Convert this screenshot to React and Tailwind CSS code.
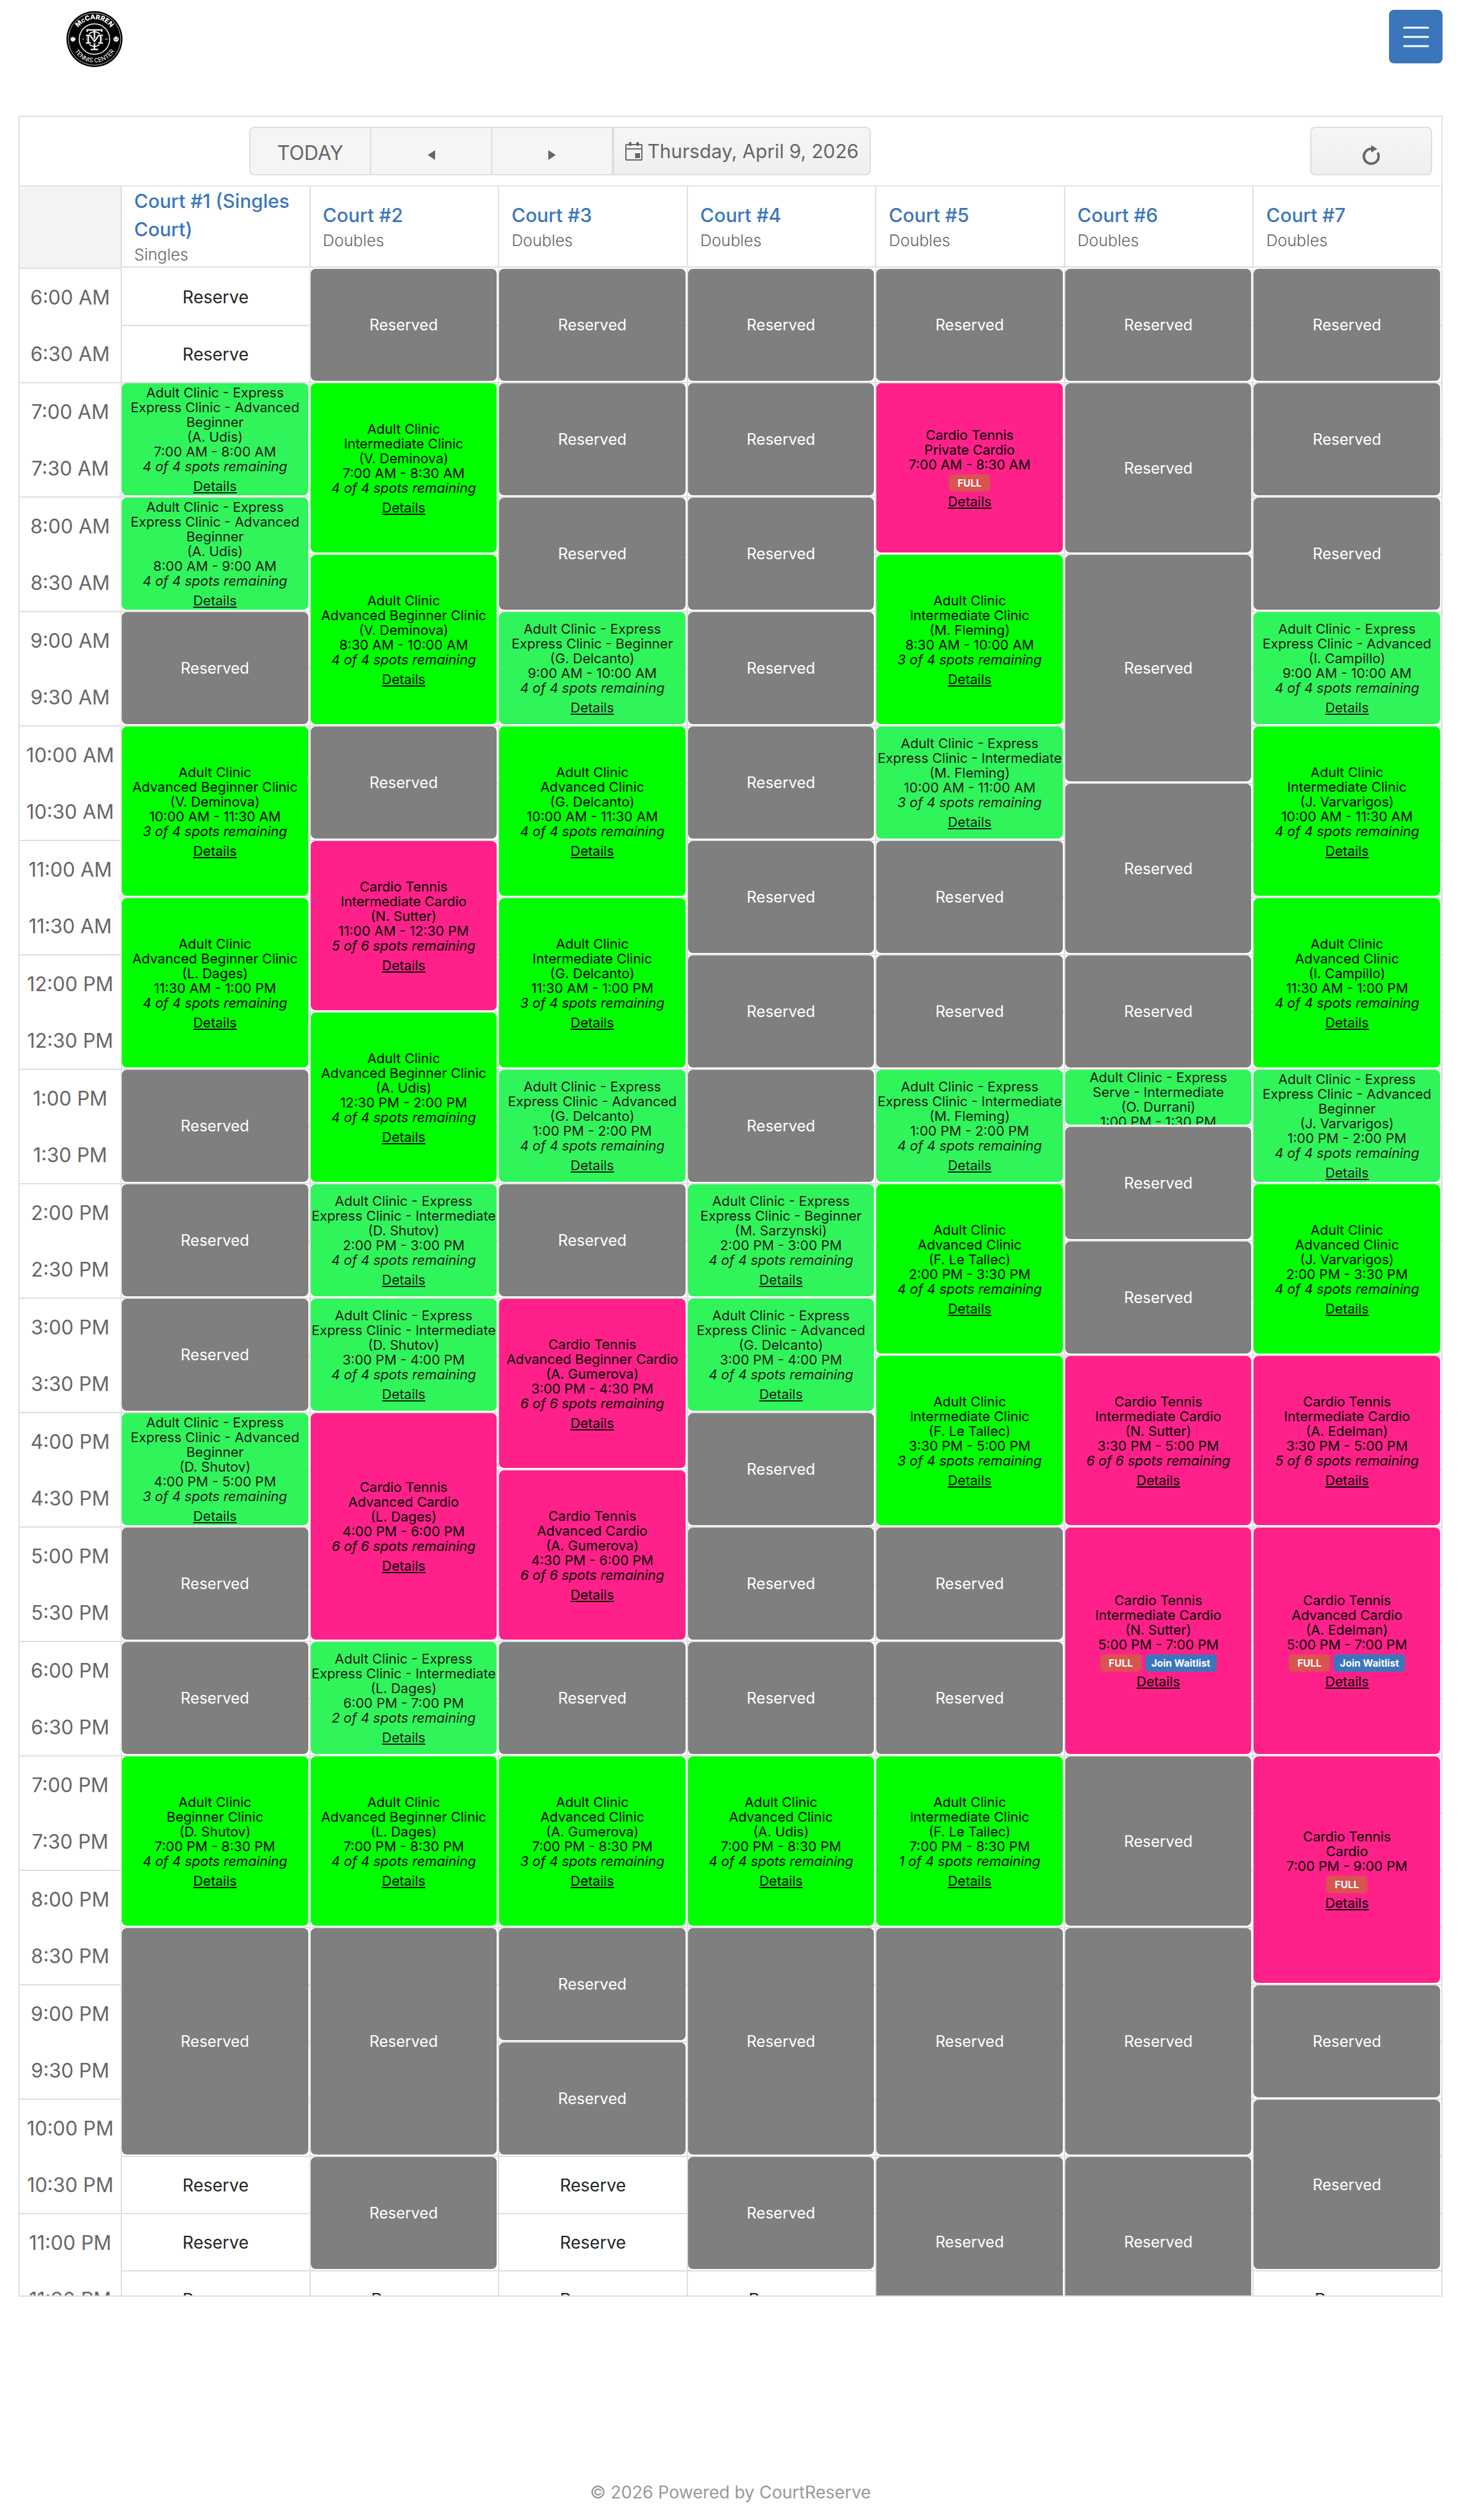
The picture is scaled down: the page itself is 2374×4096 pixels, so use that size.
import React, { useState } from 'react';

const SLOT_LABELS = [
  '6:00 AM', '6:30 AM', '7:00 AM', '7:30 AM', '8:00 AM', '8:30 AM',
  '9:00 AM', '9:30 AM', '10:00 AM', '10:30 AM', '11:00 AM', '11:30 AM',
  '12:00 PM', '12:30 PM', '1:00 PM', '1:30 PM', '2:00 PM', '2:30 PM',
  '3:00 PM', '3:30 PM', '4:00 PM', '4:30 PM', '5:00 PM', '5:30 PM',
  '6:00 PM', '6:30 PM', '7:00 PM', '7:30 PM', '8:00 PM', '8:30 PM',
  '9:00 PM', '9:30 PM', '10:00 PM', '10:30 PM', '11:00 PM', '11:30 PM',
];

const TYPES = {
  clinic: { title: 'Adult Clinic', color: 'bg-[#00ff00] text-black' },
  express: { title: 'Adult Clinic - Express', color: 'bg-[#2ff55b] text-[#1a1a1a]' },
  cardio: { title: 'Cardio Tennis', color: 'bg-[#ff2189] text-black' },
};

// start and end are slot numbers, half an hour each, counted from 6:00 AM
const reserved = (start, end) => ({ start, end, type: 'reserved' });
const event = (type, start, end, name, coach, spots, flags = {}) => ({ type, start, end, name, coach, spots, ...flags });

const COURTS = [
  {
    name: 'Court #1 (Singles Court)',
    kind: 'Singles',
    items: [
      event('express', 2, 4, 'Express Clinic - Advanced Beginner', 'A. Udis', '4 of 4'),
      event('express', 4, 6, 'Express Clinic - Advanced Beginner', 'A. Udis', '4 of 4'),
      reserved(6, 8),
      event('clinic', 8, 11, 'Advanced Beginner Clinic', 'V. Deminova', '3 of 4'),
      event('clinic', 11, 14, 'Advanced Beginner Clinic', 'L. Dages', '4 of 4'),
      reserved(14, 16),
      reserved(16, 18),
      reserved(18, 20),
      event('express', 20, 22, 'Express Clinic - Advanced Beginner', 'D. Shutov', '3 of 4'),
      reserved(22, 24),
      reserved(24, 26),
      event('clinic', 26, 29, 'Beginner Clinic', 'D. Shutov', '4 of 4'),
      reserved(29, 33),
    ],
  },
  {
    name: 'Court #2',
    kind: 'Doubles',
    items: [
      reserved(0, 2),
      event('clinic', 2, 5, 'Intermediate Clinic', 'V. Deminova', '4 of 4'),
      event('clinic', 5, 8, 'Advanced Beginner Clinic', 'V. Deminova', '4 of 4'),
      reserved(8, 10),
      event('cardio', 10, 13, 'Intermediate Cardio', 'N. Sutter', '5 of 6'),
      event('clinic', 13, 16, 'Advanced Beginner Clinic', 'A. Udis', '4 of 4'),
      event('express', 16, 18, 'Express Clinic - Intermediate', 'D. Shutov', '4 of 4'),
      event('express', 18, 20, 'Express Clinic - Intermediate', 'D. Shutov', '4 of 4'),
      event('cardio', 20, 24, 'Advanced Cardio', 'L. Dages', '6 of 6'),
      event('express', 24, 26, 'Express Clinic - Intermediate', 'L. Dages', '2 of 4'),
      event('clinic', 26, 29, 'Advanced Beginner Clinic', 'L. Dages', '4 of 4'),
      reserved(29, 33),
      reserved(33, 35),
    ],
  },
  {
    name: 'Court #3',
    kind: 'Doubles',
    items: [
      reserved(0, 2),
      reserved(2, 4),
      reserved(4, 6),
      event('express', 6, 8, 'Express Clinic - Beginner', 'G. Delcanto', '4 of 4'),
      event('clinic', 8, 11, 'Advanced Clinic', 'G. Delcanto', '4 of 4'),
      event('clinic', 11, 14, 'Intermediate Clinic', 'G. Delcanto', '3 of 4'),
      event('express', 14, 16, 'Express Clinic - Advanced', 'G. Delcanto', '4 of 4'),
      reserved(16, 18),
      event('cardio', 18, 21, 'Advanced Beginner Cardio', 'A. Gumerova', '6 of 6'),
      event('cardio', 21, 24, 'Advanced Cardio', 'A. Gumerova', '6 of 6'),
      reserved(24, 26),
      event('clinic', 26, 29, 'Advanced Clinic', 'A. Gumerova', '3 of 4'),
      reserved(29, 31),
      reserved(31, 33),
    ],
  },
  {
    name: 'Court #4',
    kind: 'Doubles',
    items: [
      reserved(0, 2),
      reserved(2, 4),
      reserved(4, 6),
      reserved(6, 8),
      reserved(8, 10),
      reserved(10, 12),
      reserved(12, 14),
      reserved(14, 16),
      event('express', 16, 18, 'Express Clinic - Beginner', 'M. Sarzynski', '4 of 4'),
      event('express', 18, 20, 'Express Clinic - Advanced', 'G. Delcanto', '4 of 4'),
      reserved(20, 22),
      reserved(22, 24),
      reserved(24, 26),
      event('clinic', 26, 29, 'Advanced Clinic', 'A. Udis', '4 of 4'),
      reserved(29, 33),
      reserved(33, 35),
    ],
  },
  {
    name: 'Court #5',
    kind: 'Doubles',
    items: [
      reserved(0, 2),
      event('cardio', 2, 5, 'Private Cardio', null, null, { full: true }),
      event('clinic', 5, 8, 'Intermediate Clinic', 'M. Fleming', '3 of 4'),
      event('express', 8, 10, 'Express Clinic - Intermediate', 'M. Fleming', '3 of 4'),
      reserved(10, 12),
      reserved(12, 14),
      event('express', 14, 16, 'Express Clinic - Intermediate', 'M. Fleming', '4 of 4'),
      event('clinic', 16, 19, 'Advanced Clinic', 'F. Le Tallec', '4 of 4'),
      event('clinic', 19, 22, 'Intermediate Clinic', 'F. Le Tallec', '3 of 4'),
      reserved(22, 24),
      reserved(24, 26),
      event('clinic', 26, 29, 'Intermediate Clinic', 'F. Le Tallec', '1 of 4'),
      reserved(29, 33),
      reserved(33, 36),
    ],
  },
  {
    name: 'Court #6',
    kind: 'Doubles',
    items: [
      reserved(0, 2),
      reserved(2, 5),
      reserved(5, 9),
      reserved(9, 12),
      reserved(12, 14),
      event('express', 14, 15, 'Serve - Intermediate', 'O. Durrani', '4 of 4'),
      reserved(15, 17),
      reserved(17, 19),
      event('cardio', 19, 22, 'Intermediate Cardio', 'N. Sutter', '6 of 6'),
      event('cardio', 22, 26, 'Intermediate Cardio', 'N. Sutter', null, { full: true, waitlist: true }),
      reserved(26, 29),
      reserved(29, 33),
      reserved(33, 36),
    ],
  },
  {
    name: 'Court #7',
    kind: 'Doubles',
    items: [
      reserved(0, 2),
      reserved(2, 4),
      reserved(4, 6),
      event('express', 6, 8, 'Express Clinic - Advanced', 'I. Campillo', '4 of 4'),
      event('clinic', 8, 11, 'Intermediate Clinic', 'J. Varvarigos', '4 of 4'),
      event('clinic', 11, 14, 'Advanced Clinic', 'I. Campillo', '4 of 4'),
      event('express', 14, 16, 'Express Clinic - Advanced Beginner', 'J. Varvarigos', '4 of 4'),
      event('clinic', 16, 19, 'Advanced Clinic', 'J. Varvarigos', '4 of 4'),
      event('cardio', 19, 22, 'Intermediate Cardio', 'A. Edelman', '5 of 6'),
      event('cardio', 22, 26, 'Advanced Cardio', 'A. Edelman', null, { full: true, waitlist: true }),
      event('cardio', 26, 30, 'Cardio', null, null, { full: true }),
      reserved(30, 32),
      reserved(32, 35),
    ],
  },
];

const Logo = () => (
  <svg viewBox="0 0 92 92" className="size-[91px]" role="img" aria-label="McCarren Tennis Center">
    <defs>
      <path id="logo-top" d="M13.500 46a32.500 32.500 0 0 1 65 0" />
      <path id="logo-bottom" d="M7.500 46a38.500 38.500 0 0 0 77 0" />
    </defs>
    <circle cx="46" cy="46" r="46" fill="#000" />
    <circle cx="46" cy="46" r="43" fill="none" stroke="#fff" strokeWidth="0.8" />
    <circle cx="46" cy="46" r="25" fill="none" stroke="#fff" strokeWidth="1.6" />
    <text fill="#fff" fontFamily="Inter, sans-serif" fontWeight="800" fontSize="11">
      <textPath href="#logo-top" startOffset="50%" textAnchor="middle">M<tspan fontSize="8">C</tspan>CARREN</textPath>
    </text>
    <text fill="#fff" fontFamily="Inter, sans-serif" fontSize="10">
      <textPath href="#logo-bottom" startOffset="50%" textAnchor="middle">TENNIS CENTER</textPath>
    </text>
    <circle cx="46" cy="46" r="12" fill="none" stroke="#fff" strokeWidth="1.8" />
    <path d="M34 34v-3h24v3M46 31v31M40 63h12" fill="none" stroke="#fff" strokeWidth="2.4" />
    <path d="M32 40h7l7 10 7-10h7M36 40v12M56 40v12M32 52.500h8M52 52.500h8" fill="none" stroke="#000" strokeWidth="4" />
    <path d="M32 40h7l7 10 7-10h7M36 40v12M56 40v12M32 52.500h8M52 52.500h8" fill="none" stroke="#fff" strokeWidth="2.200" />
    <path d="M26 46h3M63 46h5" stroke="#aaa" strokeWidth="1.500" />
    <path d="M10.500 41l1.500 3 3-1-1 3 1.500 1-3.500 2.500h-1v1.500h-1v-1.500h-1L6 47l1.500-1-1-3 3 1z" fill="#fff" />
    <circle cx="81.500" cy="46" r="4.300" fill="#fff" />
    <path d="M79.500 42.500v3a2 2 0 0 0 4 0v-3" fill="none" stroke="#000" strokeWidth="0.700" />
  </svg>
);

const Badge = ({ className, children }) => (
  <span className={`h-7 flex items-center rounded-md text-[16px] leading-6 font-bold text-white ${className}`}>{children}</span>
);

const ReservedBlock = ({ item }) => (
  <div
    className="col-start-1 mr-0.5 mb-1 rounded-lg bg-[#7f7f7f] text-white text-[25px] leading-8 flex items-center justify-center"
    style={{ gridRow: `${item.start + 1} / ${item.end + 1}` }}
  >
    Reserved
  </div>
);

const EventBlock = ({ item }) => {
  const type = TYPES[item.type];
  return (
    <div
      className={`col-start-1 min-h-0 mr-0.5 mb-1 rounded-lg overflow-hidden flex flex-col text-center text-[22px] leading-6 ${type.color}`}
      style={{ gridRow: `${item.start + 1} / ${item.end + 1}` }}
    >
      <div className="my-auto">
        <div>{type.title}</div>
        <div>{item.name}</div>
        {item.coach && <div>({item.coach})</div>}
        <div>{SLOT_LABELS[item.start]} - {SLOT_LABELS[item.end]}</div>
        {item.spots && <div className="italic pb-1">{item.spots} spots remaining</div>}
        {item.full && (
          <div className="flex justify-center gap-1.5 mt-1">
            <Badge className="px-3.5 bg-[#d9534f]">FULL</Badge>
            {item.waitlist && (
              <button><Badge className="px-2.5 bg-[#3b76bc]">Join Waitlist</Badge></button>
            )}
          </div>
        )}
        <a href="#" className="block mt-1 underline underline-offset-2">Details</a>
      </div>
    </div>
  );
};

const CourtColumn = ({ court }) => {
  const isTaken = (slot) => court.items.some((item) => slot >= item.start && slot < item.end);

  return (
    <div className="grid grid-cols-1 auto-rows-[93px] border-r-2 border-[#dedede]">
      {SLOT_LABELS.map((label, slot) => (
        <div
          key={label}
          className="col-start-1 border-b-2 border-[#dedede] flex"
          style={{ gridRow: slot + 1 }}
        >
          {!isTaken(slot) && (
            <button className="flex-1 text-[28px] leading-8 text-[#212529]">Reserve</button>
          )}
        </div>
      ))}
      {court.items.map((item) =>
        item.type === 'reserved'
          ? <ReservedBlock key={item.start} item={item} />
          : <EventBlock key={item.start} item={item} />
      )}
    </div>
  );
};

const Toolbar = ({ onShift, onToday, dateLabel }) => (
  <div className="flex justify-between py-4 pl-[373px] pr-[15px] border-b-2 border-r-2 border-[#e6e6e6] text-[32px] leading-10 text-[#666]">
    <div className="flex h-[79px]">
      <button onClick={onToday} className="w-[196px] pt-1.5 border-2 border-r-0 border-[#dedede] rounded-l-lg bg-[#f5f5f5]">TODAY</button>
      <button onClick={() => onShift(-1)} aria-label="Previous" className="w-[197px] pt-3 flex items-center justify-center border-y-2 border-l-2 border-[#dedede] bg-[#f5f5f5]">
        <svg viewBox="0 0 12 16" className="w-3 h-4"><path d="M12 0v16L0 8z" fill="#666" /></svg>
      </button>
      <button onClick={() => onShift(1)} aria-label="Next" className="w-[196px] pt-3 flex items-center justify-center border-y-2 border-l-2 border-[#dedede] bg-[#f5f5f5]">
        <svg viewBox="0 0 12 16" className="w-3 h-4"><path d="M0 0v16l12-8z" fill="#666" /></svg>
      </button>
      <button className="px-[18px] flex items-center gap-2 text-[31px] border-2 border-l-4 border-[#dedede] rounded-r-lg bg-linear-to-b from-[#f6f6f6] to-[#efefef]">
        <svg viewBox="0 0 28 30" className="w-7 h-[30px]">
          <path d="M2 4h24a1 1 0 0 1 1 1v23a1 1 0 0 1-1 1H2a1 1 0 0 1-1-1V5a1 1 0 0 1 1-1zM1 11h26" fill="none" stroke="#666" strokeWidth="2" />
          <path d="M6 0h4v6H6zM18 0h4v6h-4zM16 18h8v8h-8z" fill="#666" />
        </svg>
        {dateLabel}
      </button>
    </div>
    <button aria-label="Refresh" className="w-[198px] pt-3 flex items-center justify-center border-2 border-[#dedede] rounded-lg bg-linear-to-b from-[#f6f6f6] to-[#efefef]">
      <svg viewBox="0 0 28 32" className="w-7 h-8">
        <path d="M15 6.100A12 12 0 1 0 24.500 12" fill="none" stroke="#666" strokeWidth="4" />
        <path d="M14 0v12l10-6z" fill="#666" />
      </svg>
    </button>
  </div>
);

export default function App() {
  const [date, setDate] = useState(new Date(2026, 3, 9));

  const shiftDate = (days) => {
    setDate(new Date(date.getFullYear(), date.getMonth(), date.getDate() + days));
  };

  const dateLabel = date.toLocaleDateString('en-US', { weekday: 'long', month: 'long', day: 'numeric', year: 'numeric' });

  return (
    <div className="bg-white font-[Inter,sans-serif]">
      <header className="flex justify-between items-start pt-4 pl-[108px] pr-[30px] h-[188px]">
        <a href="#" className="mt-0.5"><Logo /></a>
        <button aria-label="Menu" className="size-[87px] flex items-center justify-center rounded-lg bg-[#3b76bc]">
          <svg viewBox="0 0 42 34" className="w-[42px] h-[34px]">
            <path d="M1.500 2h39M1.500 17h39M1.500 32h39" stroke="#fff" strokeWidth="3" strokeLinecap="round" />
          </svg>
        </button>
      </header>

      <main className="mx-[30px] border-t-2 border-l-2 border-b-2 border-[#dedede]">
        <Toolbar dateLabel={dateLabel} onShift={shiftDate} onToday={() => setDate(new Date())} />

        <div className="grid grid-cols-[166px_repeat(7,minmax(0,1fr))] min-h-[134px]">
          <div className="bg-[#f3f3f3] border-r-2 border-b-2 border-[#dedede]"></div>
          {COURTS.map((court) => (
            <div key={court.name} className="mb-0.5 px-5 flex flex-col justify-center border-r-2 border-b-2 border-[#dedede]">
              <h2 className="text-[31px] leading-[46px] font-medium text-[#3b76bc]">{court.name}</h2>
              <p className="text-[26px] leading-9 font-light text-[#666]">{court.kind}</p>
            </div>
          ))}
        </div>

        <div className="grid grid-cols-[166px_repeat(7,minmax(0,1fr))] max-h-[3294px] overflow-hidden">
          <div className="border-r-2 border-[#dedede] text-[32px] leading-10 text-[#666]">
            {SLOT_LABELS.map((label, slot) => (
              <div
                key={label}
                className={`h-[93px] flex items-center justify-center whitespace-nowrap border-[#dedede] ${slot % 2 ? 'border-b-2' : ''}`}
              >
                {label}
              </div>
            ))}
          </div>
          {COURTS.map((court) => <CourtColumn key={court.name} court={court} />)}
        </div>
      </main>

      <footer className="pt-[298px] pb-6 text-center text-[28px] leading-10 text-[#999]">
        © 2026 Powered by CourtReserve
      </footer>
    </div>
  );
}
